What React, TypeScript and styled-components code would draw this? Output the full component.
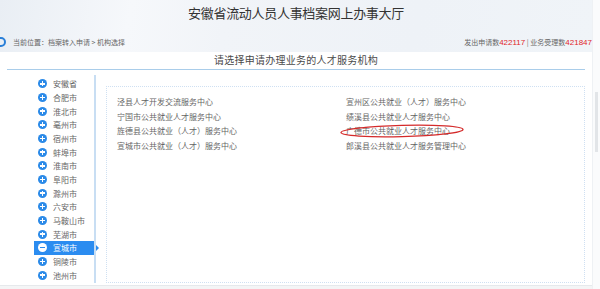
import React from "react";
import styled, { createGlobalStyle } from "styled-components";

const Global = createGlobalStyle`
  html, body { margin: 0; padding: 0; background: #fff; overflow: hidden; }
  body { font-family: "Noto Sans CJK SC", "Noto Sans", sans-serif; }
`;

const Page = styled.div`
  width: 600px;
  height: 289px;
  display: flex;
  overflow: hidden;
`;

const Main = styled.div`
  width: 592px;
  display: flex;
  flex-direction: column;
`;

const ScrollTrack = styled.div`
  flex: 1;
  background: #fafbfc;
  border-left: 1px solid #eef1f4;
  display: flex;
  align-items: flex-start;
  justify-content: center;
  padding-top: 92px;
`;

const ScrollThumb = styled.div`
  width: 3px;
  height: 60px;
  background: #e2e5e8;
`;

const Top = styled.div`
  height: 52px;
  background: linear-gradient(100deg, #e9eef4 0%, #f6f8fb 22%, #f1f4f8 38%, #eef2f7 70%, #f0f4f8 100%);
  display: flex;
  flex-direction: column;
`;

const Title = styled.h1`
  margin: 0;
  height: 25px;
  display: flex;
  align-items: center;
  justify-content: center;
  font-size: 13px;
  letter-spacing: -0.3px;
  font-weight: 400;
  color: #333;
`;

const Crumbs = styled.div`
  height: 27px;
  padding-top: 7px;
  box-sizing: border-box;
  display: flex;
  align-items: center;
  justify-content: space-between;
  font-size: 7px;
  color: #666;
`;

const CrumbLeft = styled.div`
  display: flex;
  align-items: center;
  gap: 7px;
  margin-left: -4px;
`;

const Ring = styled.span`
  width: 6px;
  height: 6px;
  border: 2px solid #2a7fd8;
  border-radius: 50%;
`;

const Counter = styled.div`
  white-space: nowrap;
`;

const Red = styled.span`
  color: #e0262b;
  font-family: "Liberation Sans", sans-serif;
  font-size: 8px;
`;

const SectionTitle = styled.div`
  height: 15px;
  margin: 0 7px;
  border-bottom: 1.5px solid #a9cdea;
  display: flex;
  align-items: center;
  justify-content: center;
  font-size: 10px;
  letter-spacing: 0.25px;
  color: #4a4a4a;
  padding-bottom: 2px;
`;

const Body = styled.div`
  margin-top: 5px;
  height: 210px;
  display: flex;
`;

const Sidebar = styled.ul`
  list-style: none;
  margin: 0;
  padding: 2px 0 0 0;
  width: 94px;
  border-right: 2px solid #c8def3;
  height: 206px;
`;

const Item = styled.li<{ $active?: boolean }>`
  position: relative;
  height: 13.66px;
  margin-left: 34px;
  padding-left: 4px;
  display: flex;
  align-items: center;
  gap: 6px;
  font-size: 8px;
  color: ${(p) => (p.$active ? "#fff" : "#666")};
  background: ${(p) => (p.$active ? "#2b8cf0" : "transparent")};
  &::after {
    content: "";
    display: ${(p) => (p.$active ? "block" : "none")};
    position: absolute;
    right: -5px;
    top: 4px;
    border-left: 3px solid #2b8cf0;
    border-top: 3px solid transparent;
    border-bottom: 3px solid transparent;
  }
`;

const Dot = styled.span<{ $active?: boolean }>`
  position: relative;
  width: 9px;
  height: 9px;
  border-radius: 50%;
  background: ${(p) => (p.$active ? "#fff" : "#2b8ae8")};
  flex: none;
  &::before, &::after {
    content: "";
    position: absolute;
    background: ${(p) => (p.$active ? "#2b8cf0" : "#fff")};
  }
  &::before { left: 2px; right: 2px; top: 3.75px; height: 1.5px; }
  &::after {
    display: ${(p) => (p.$active ? "none" : "block")};
    top: 2px; bottom: 2px; left: 3.75px; width: 1.5px;
  }
`;

const Panel = styled.div`
  margin: 11px 7px 2px 10px;
  flex: 1;
  border: 1px dotted #cfe0f2;
  padding: 7px 0 0 10px;
  display: grid;
  grid-template-columns: 229px 1fr;
  grid-auto-rows: 14.8px;
  align-content: start;
`;

const Org = styled.div`
  position: relative;
  display: flex;
  align-items: center;
  font-size: 8px;
  color: #666;
  white-space: nowrap;
`;

const Circle = styled.svg`
  position: absolute;
  left: -6px;
  top: 1px;
  overflow: visible;
`;

const Footer = styled.div`
  flex: 1;
  border-top: 1px solid #e6e9ec;
  background: #f4f5f6;
`;

const cities = [
  "安徽省", "合肥市", "淮北市", "亳州市", "宿州市", "蚌埠市", "淮南市", "阜阳市",
  "滁州市", "六安市", "马鞍山市", "芜湖市", "宣城市", "铜陵市", "池州市",
];

const orgs = [
  "泾县人才开发交流服务中心",
  "宣州区公共就业（人才）服务中心",
  "宁国市公共就业人才服务中心",
  "绩溪县公共就业人才服务中心",
  "旌德县公共就业（人才）服务中心",
  "广德市公共就业人才服务中心",
  "宣城市公共就业（人才）服务中心",
  "郎溪县公共就业人才服务管理中心",
];

export default function App() {
  return (
    <>
      <Global />
      <Page>
        <Main>
          <Top>
            <Title>安徽省流动人员人事档案网上办事大厅</Title>
            <Crumbs>
              <CrumbLeft>
                <Ring />
                <span>当前位置：档案转入申请 &gt; 机构选择</span>
              </CrumbLeft>
              <Counter>
                发出申请数<Red>422117</Red> | 业务受理数<Red>421847</Red>
              </Counter>
            </Crumbs>
          </Top>
          <SectionTitle>请选择申请办理业务的人才服务机构</SectionTitle>
          <Body>
            <Sidebar>
              {cities.map((c) => (
                <Item key={c} $active={c === "宣城市"}>
                  <Dot $active={c === "宣城市"} />
                  {c}
                </Item>
              ))}
            </Sidebar>
            <Panel>
              {orgs.map((o) => (
                <Org key={o}>
                  {o}
                  {o.startsWith("广德市") && (
                    <Circle width="124" height="12" viewBox="0 0 124 12">
                      <ellipse
                        cx="62"
                        cy="6"
                        rx="61"
                        ry="5.6"
                        fill="none"
                        stroke="#d42a2a"
                        strokeWidth="1.4"
                        transform="rotate(-1.5 62 6)"
                      />
                    </Circle>
                  )}
                </Org>
              ))}
            </Panel>
          </Body>
          <Footer />
        </Main>
        <ScrollTrack>
          <ScrollThumb />
        </ScrollTrack>
      </Page>
    </>
  );
}
